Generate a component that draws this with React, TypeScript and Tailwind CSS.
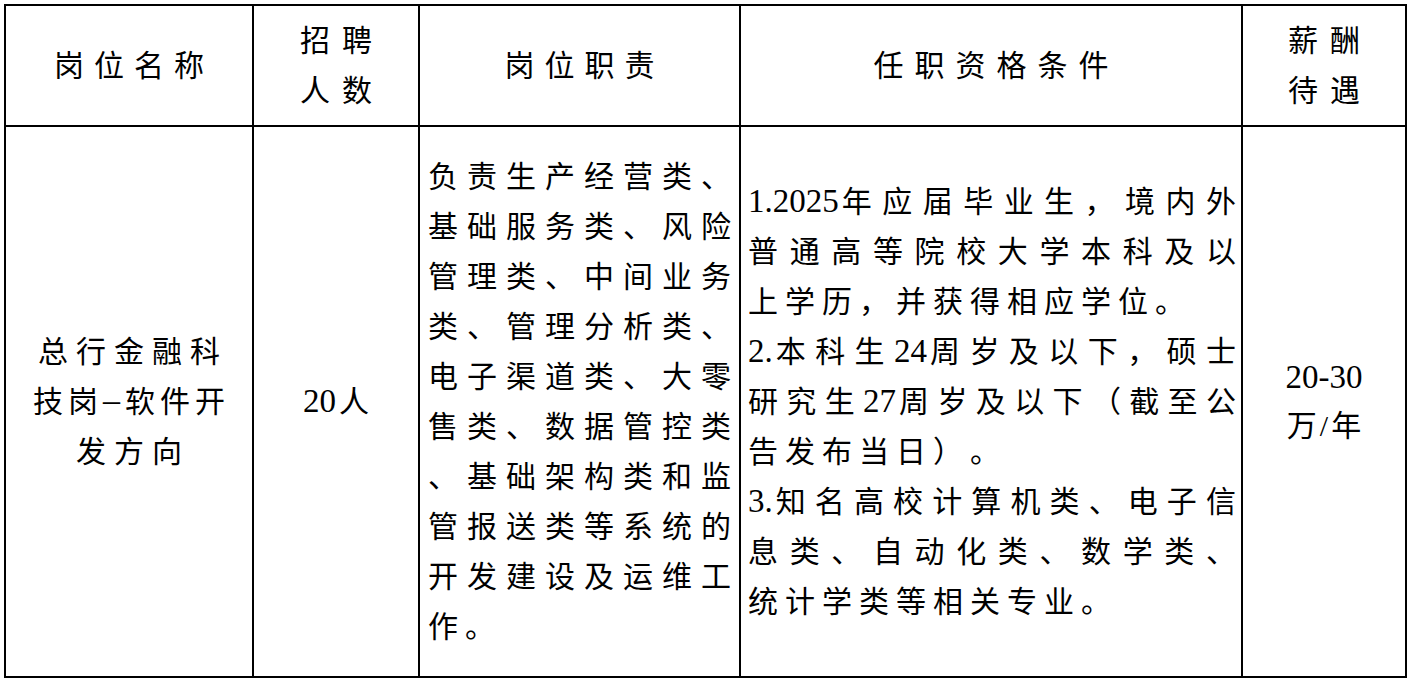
import React from "react";

const LAT = "[0-9A-Za-z.\\-\\/]";
const TOKRE = new RegExp(`${LAT}+[^0-9A-Za-z.\\-\\/]?|[\\s\\S]`, "gu");
const LATRUN = new RegExp(`^(${LAT}+)([\\s\\S]?)$`, "u");

function tokens(s: string): string[] {
  return s.match(TOKRE) ?? [];
}

function Tok({ t }: { t: string }) {
  const m = t.match(LATRUN);
  if (m) {
    return (
      <span className="flex items-center gap-[3px]">
        <span className="text-[33px] leading-none">{m[1]}</span>
        {m[2] ? <span className="text-[30px] leading-none">{m[2]}</span> : null}
      </span>
    );
  }
  return <span className="text-[30px] leading-none">{t}</span>;
}

function JLine({ text }: { text: string }) {
  return (
    <div className="flex h-[50px] items-center justify-between">
      {tokens(text).map((t, i) => (
        <Tok key={i} t={t} />
      ))}
    </div>
  );
}

function LLine({ text }: { text: string }) {
  return (
    <div className="flex h-[50px] items-center gap-[7px]">
      {tokens(text).map((t, i) => (
        <Tok key={i} t={t} />
      ))}
    </div>
  );
}

function CLine({ text, gap }: { text: string; gap: string }) {
  return (
    <div className={`flex h-[50px] items-center justify-center ${gap}`}>
      {tokens(text).map((t, i) => (
        <Tok key={i} t={t} />
      ))}
    </div>
  );
}

const cell = "border-r-2 border-b-2 border-black flex flex-col justify-center";

export default function App() {
  const duties = [
    "负责生产经营类、",
    "基础服务类、风险",
    "管理类、中间业务",
    "类、管理分析类、",
    "电子渠道类、大零",
    "售类、数据管控类",
    "、基础架构类和监",
    "管报送类等系统的",
    "开发建设及运维工",
  ];
  const reqs: [string, boolean][] = [
    ["1.2025年应届毕业生，境内外", true],
    ["普通高等院校大学本科及以", true],
    ["上学历，并获得相应学位。", false],
    ["2.本科生24周岁及以下，硕士", true],
    ["研究生27周岁及以下（截至公", true],
    ["告发布当日）。", false],
    ["3.知名高校计算机类、电子信", true],
    ["息类、自动化类、数学类、", true],
    ["统计学类等相关专业。", false],
  ];
  return (
    <div className="w-[1409px] h-[679px] bg-white text-black font-['Liberation_Serif','Noto_Sans_CJK_SC',serif] pl-[4px] pt-[4px]">
      <div className="grid grid-cols-[248px_166px_321px_502px_164px] grid-rows-[121px_551px] border-l-2 border-t-2 border-black w-[1403px]">
        {/* header */}
        <div className={cell}>
          <CLine text="岗位名称" gap="gap-[10px]" />
        </div>
        <div className={cell}>
          <CLine text="招聘" gap="gap-[12px]" />
          <CLine text="人数" gap="gap-[12px]" />
        </div>
        <div className={cell}>
          <CLine text="岗位职责" gap="gap-[10px]" />
        </div>
        <div className={cell}>
          <CLine text="任职资格条件" gap="gap-[11px]" />
        </div>
        <div className={cell}>
          <CLine text="薪酬" gap="gap-[12px]" />
          <CLine text="待遇" gap="gap-[12px]" />
        </div>

        {/* body */}
        <div className={cell}>
          <CLine text="总行金融科" gap="gap-[8px]" />
          <div className="flex h-[50px] items-center justify-center gap-[5px]">
            <span className="text-[30px] leading-none">技</span>
            <span className="text-[30px] leading-none">岗</span>
            <span className="text-[34px] leading-none -translate-y-[2px]">–</span>
            <span className="text-[30px] leading-none">软</span>
            <span className="text-[30px] leading-none">件</span>
            <span className="text-[30px] leading-none">开</span>
          </div>
          <CLine text="发方向" gap="gap-[8px]" />
        </div>
        <div className={cell}>
          <CLine text="20人" gap="gap-[4px]" />
        </div>
        <div className={`${cell} pl-[8px] pr-[8px]`}>
          {duties.map((d, i) => (
            <JLine key={i} text={d} />
          ))}
          <LLine text="作。" />
        </div>
        <div className={`${cell} pl-[7px] pr-[5px]`}>
          {reqs.map(([t, j], i) =>
            j ? <JLine key={i} text={t} /> : <LLine key={i} text={t} />
          )}
        </div>
        <div className={`${cell} items-center`}>
          <div className="flex h-[48px] items-center">
            <span className="text-[33px] leading-none">20-30</span>
          </div>
          <div className="flex h-[48px] items-center gap-[3px]">
            <span className="text-[30px] leading-none">万</span>
            <span className="text-[30px] leading-none">/</span>
            <span className="text-[30px] leading-none">年</span>
          </div>
        </div>
      </div>
    </div>
  );
}
